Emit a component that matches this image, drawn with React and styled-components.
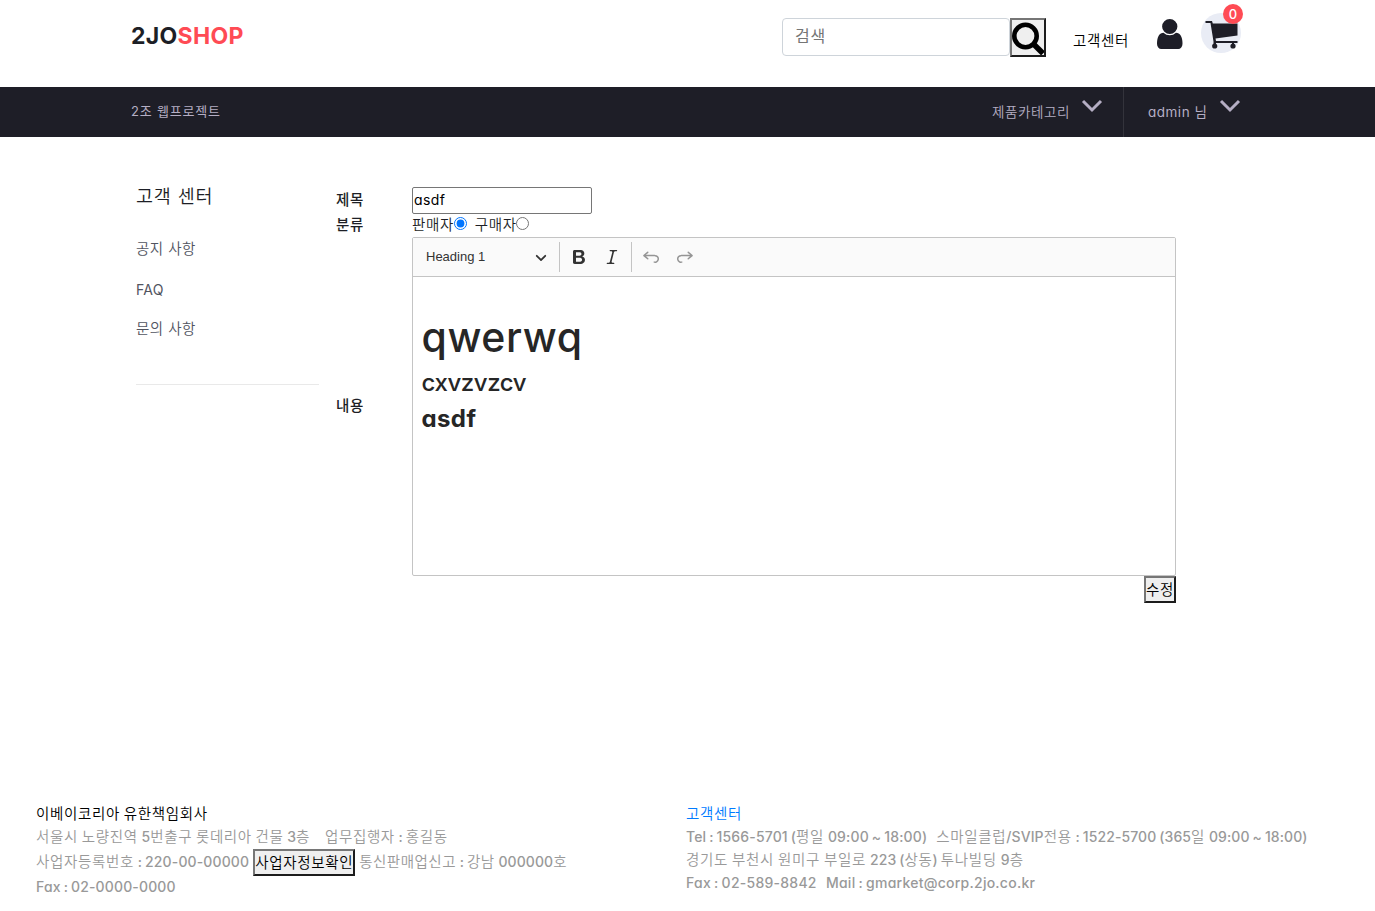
import React from 'react';
import styled, { createGlobalStyle, css } from 'styled-components';

const Global = createGlobalStyle`
  * { box-sizing: border-box; }
  body { margin: 0; background: #fff; font-family: Inter, "Noto Sans CJK KR", sans-serif; font-feature-settings: "cv11"; font-size: 15px; color: #1d1f26; }
`;
const Page = styled.div`width: 100%; height: 911px; overflow: hidden; display: flex; flex-direction: column;`;
const T = styled.span`
  display: block; white-space: pre;
  font-size: ${p => p.$s || 14}px; line-height: ${p => p.$lh || 24}px;
  letter-spacing: ${p => p.$ls || 0}px; font-weight: ${p => p.$w || 400}; color: ${p => p.$c || 'inherit'};
`;
const Header = styled.header`height: 87px; display: flex; align-items: flex-start; padding-left: 131px;`;
const Logo = styled.div`
  width: 651px; padding-top: 19px; font-size: 23px; line-height: 34px; font-weight: 700; letter-spacing: 0.3px;
  span { color: #ff4b54; }
`;
const Search = styled.input`
  width: 228px; height: 38px; margin-top: 18px; padding: 0 12px 2px; border: 1px solid #ced4da; border-radius: 4px;
  font: 16px Inter, "Noto Sans CJK KR", sans-serif; letter-spacing: 0.8px; outline: 0;
  &::placeholder { color: #757575; opacity: 1; }
`;
const outset = css`background: #efefef; border: 2px solid; border-color: #767676 #1c1c1c #1c1c1c #767676; color: #000;`;
const SearchButton = styled.button`${outset} width: 36px; height: 39px; margin-top: 18px; padding: 0; overflow: hidden; svg { display: block; }`;
const HelpLink = styled.a`margin: 29px 0 0 27px; width: 84px;`;
const UserIcon = styled.svg`margin-top: 18.5px; width: 25.5px; height: 30px;`;
const Cart = styled.div`
  position: relative; margin: 13px 0 0 18.5px; width: 40px; height: 40px; border-radius: 50%; background: #e9ecf5;
  svg { display: block; margin: 6px 0 0 4px; }
`;
const Badge = styled.span`
  position: absolute; left: 22px; top: -9px; width: 20px; height: 20px; border-radius: 50%; background: #ff4b54;
  color: #fff; font-size: 13px; line-height: 20px; text-align: center; font-weight: 500;
`;
const Nav = styled.nav`height: 50px; background: #1e1e27; color: #b5aec4; display: flex; padding-left: 131px;`;
const NavTitle = styled.div`width: 861px; padding-top: 12px;`;
const NavItem = styled.div`
  display: flex; align-items: flex-start; width: ${p => p.$width}px; padding-left: ${p => p.$pl || 0}px;
  border-left: ${p => (p.$line ? '1px solid #33333b' : '0')};
  span { padding-top: 13px; width: ${p => p.$label}px; }
  svg { margin-top: 12px; }
`;
const Main = styled.main`display: flex; height: 665px; padding: 50px 0 0 136px;`;
const Side = styled.aside`width: 183px; height: 198px; border-bottom: 1px solid #e9e9e9; display: flex; flex-direction: column;`;
const SideLink = styled.a`margin-top: ${p => p.$mt}px;`;
const Form = styled.form`margin-left: 17px; width: 840px; display: grid; grid-template-columns: 76px 764px; grid-template-rows: 27px 23px 339px 27px; align-items: center;`;
const Label = styled.label`padding-bottom: 2px;`;
const TextInput = styled.input`width: 180px; height: 27px; padding: 0 1px 3px; border: 1px solid #767676; border-radius: 2px; font: 14px Inter, sans-serif; font-feature-settings: "cv11"; letter-spacing: 0.4px; outline: 0;`;
const Radios = styled.div`display: flex; height: 25px; align-items: flex-start;`;
const Radio = styled.input`width: 13px; height: 13px; margin: 4px ${p => p.$mr || 0}px 0 -0.3px; accent-color: #0075ff;`;
const Editor = styled.div`height: 339px; border: 1px solid #c4c4c4; border-radius: 2px; color: #262626;`;
const Toolbar = styled.div`height: 39px; background: #fafafa; border-bottom: 1px solid #c4c4c4; display: flex; align-items: center; padding-left: 13px; color: #333;`;
const Heading = styled.div`width: 133px; display: flex; align-items: center; font: 13px "Liberation Sans", Arial, sans-serif; span { width: 109px; padding-bottom: 1px; } svg { margin-bottom: 1px; }`;
const Divider = styled.i`width: 1px; height: 30px; background: #c4c4c4; margin-right: ${p => p.$mr}px;`;
const Tool = styled.svg`width: 20px; height: 20px; fill: #333; margin-right: ${p => p.$mr || 0}px; opacity: ${p => (p.$off ? 0.5 : 1)}; transform: ${p => (p.$flip ? 'scaleX(-1)' : 'none')};`;
const Content = styled.div`padding: 36px 8.5px;`;
const Submit = styled.button`${outset} grid-column: 2; justify-self: end; width: 32px; height: 27px; padding: 0 0 3px; font-family: inherit;`;
const Footer = styled.footer`display: flex; padding-left: 36px; color: #999; word-spacing: -0.9px;`;
const Col = styled.div`width: ${p => p.$width}px; height: 108px;`;
const Line = styled.div`display: flex; align-items: center; height: ${p => p.$h}px;`;
const InfoButton = styled.button`${outset} width: 102px; height: 27px; padding: 0 0 3px; margin: 1px 4px 0; font-family: inherit;`;

const Chevron = () => (
  <svg width="22" height="14" viewBox="0 0 22 14"><path d="M2 2l9 9 9-9" fill="none" stroke="#b5aec4" strokeWidth="3" /></svg>
);
const Undo = 'm5.042 9.367 2.189 1.837a.75.75 0 0 1-.965 1.149l-3.788-3.18a.747.747 0 0 1-.21-.284.75.75 0 0 1 .17-.945L6.23 4.762a.75.75 0 1 1 .964 1.15L4.863 7.866h8.917A.75.75 0 0 1 14 7.9a4 4 0 1 1-1.477 7.718l.344-1.489a2.5 2.5 0 1 0 1.094-4.73l.008-.032H5.042z';
const Ko = p => <T $s={14.5} $ls={0.65} $w={350} {...p} />;
const En = p => <T $s={14} $ls={0.1} $w={500} {...p} />;

export default function App() {
  return (
    <Page>
      <Global />
      <Header>
        <Logo>2JO<span>SHOP</span></Logo>
        <Search placeholder="검색" />
        <SearchButton type="button">
          <svg width="32" height="35" viewBox="0 0 32 35"><circle cx="13.500" cy="16" r="11.200" fill="none" stroke="#000" strokeWidth="4.600" /><path d="M21.500 24l9.500 9.500" stroke="#000" strokeWidth="5.500" /></svg>
        </SearchButton>
        <HelpLink><Ko $c="#000">고객센터</Ko></HelpLink>
        <UserIcon viewBox="0 -1408 1280 1536" preserveAspectRatio="none"><path transform="scale(1,-1)" fill="#1e1e27" d="M1280 137q0 -109 -62.500 -187t-150.500 -78h-854q-88 0 -150.500 78t-62.500 187q0 85 8.500 160.500t31.500 152t58.500 131t94 89t134.500 34.500q131 -128 313 -128t313 128q76 0 134.500 -34.500t94 -89t58.500 -131t31.500 -152t8.500 -160.500zM1024 1024q0 -159 -112.500 -271.500t-271.500 -112.500t-271.500 112.500t-112.500 271.500t112.500 271.500t271.500 112.500t271.500 -112.500t112.500 -271.500z" /></UserIcon>
        <Cart>
          <svg width="34" height="31" viewBox="0 0 34 31" fill="#1e1e27"><path d="M.5 2H7l.8 2.500H32.500v12L10.500 19.500l.5 2.500H32.500v2H29v3h-2v-3H11v3H8.500v-4.500L5.500 4h-5z" /><circle cx="9.700" cy="27" r="2.600" /><circle cx="28" cy="27" r="2.600" /></svg>
          <Badge>0</Badge>
        </Cart>
      </Header>
      <Nav>
        <NavTitle><T $s={13} $ls={0.8}>2조 웹프로젝트</T></NavTitle>
        <NavItem $width={131} $label={89}><T $s={13.500} $ls={0.6} $w={350}>제품카테고리</T><Chevron /></NavItem>
        <NavItem $width={150} $line $pl={24} $label={71}><T $s={13.500} $ls={0.5}>admin 님</T><Chevron /></NavItem>
      </Nav>
      <Main>
        <Side>
          <T $s={18.500} $ls={0.8} $w={350} $lh={19}>고객 센터</T>
          <SideLink $mt={31}><Ko $ls={0.5} $c="#51545f">공지 사항</Ko></SideLink>
          <SideLink $mt={17}><T $ls={0.3} $c="#51545f">FAQ</T></SideLink>
          <SideLink $mt={15}><Ko $ls={0.5} $c="#51545f">문의 사항</Ko></SideLink>
        </Side>
        <Form>
          <Label><Ko $w={500}>제목</Ko></Label><TextInput defaultValue="asdf" />
          <Label><Ko $w={500}>분류</Ko></Label>
          <Radios><Ko>판매자</Ko><Radio type="radio" name="role" defaultChecked $mr={8} /><Ko>구매자</Ko><Radio type="radio" name="role" /></Radios>
          <Label><Ko $w={500}>내용</Ko></Label>
          <Editor>
            <Toolbar>
              <Heading><span>Heading 1</span><svg width="12" height="12" viewBox="0 0 10 10"><path fill="#333" d="M.941 4.523a.75.75 0 1 1 1.060-1.060l3.006 3.005 3.005-3.005a.75.75 0 1 1 1.060 1.060l-3.549 3.550a.75.75 0 0 1-1.168-.136L.941 4.523z" /></svg></Heading>
              <Divider $mr={9} />
              <Tool viewBox="0 0 20 20" $mr={13}><path d="M10.187 17H5.773c-.637 0-1.092-.138-1.364-.415-.273-.277-.409-.718-.409-1.323V4.738c0-.617.14-1.062.419-1.332.279-.27.73-.406 1.354-.406h4.680c.69 0 1.288.041 1.793.124.506.083.96.242 1.360.478.341.197.644.447.906.75a3.262 3.262 0 0 1 .808 2.162c0 1.401-.722 2.426-2.167 3.075C15.050 10.175 16 11.315 16 13.010a3.756 3.756 0 0 1-2.296 3.504 6.100 6.100 0 0 1-1.517.377c-.571.073-1.238.11-2 .11zm-.217-6.217H7v4.087h3.069c1.977 0 2.965-.69 2.965-2.072 0-.707-.256-1.220-.768-1.537-.512-.319-1.277-.478-2.296-.478zM7 5.130v3.619h2.606c.729 0 1.292-.067 1.690-.2a1.600 1.600 0 0 0 .91-.765c.165-.267.247-.566.247-.897 0-.707-.26-1.176-.778-1.409-.519-.232-1.310-.348-2.375-.348H7z" /></Tool>
              <Tool viewBox="0 0 20 20" $mr={9}><path d="m9.586 14.633.021.004c-.036.335.095.655.393.962.082.083.173.15.274.201h1.474a.6.6 0 1 1 0 1.200H5.304a.6.6 0 0 1 0-1.200h1.150c.474-.07.809-.182 1.005-.334.157-.122.291-.32.404-.597l2.416-9.550a1.053 1.053 0 0 0-.281-.823 1.120 1.120 0 0 0-.442-.296H8.150a.6.6 0 0 1 0-1.200h6.443a.6.6 0 1 1 0 1.200h-1.195c-.376.056-.65.155-.823.296-.215.175-.423.439-.623.79l-2.366 9.347z" /></Tool>
              <Divider $mr={9} />
              <Tool viewBox="0 0 20 20" $off $mr={14}><path d={Undo} /></Tool>
              <Tool viewBox="0 0 20 20" $off $flip><path d={Undo} /></Tool>
            </Toolbar>
            <Content>
              <T $s={41} $ls={0.6} $lh={49} $w={450}>qwerwq</T>
              <T $s={24} $ls={-0.4} $lh={42} $w={500}>cxvzvzcv</T>
              <T $s={24} $ls={0.4} $lh={30} $w={700}>asdf</T>
            </Content>
          </Editor>
          <Submit type="button"><Ko>수정</Ko></Submit>
        </Form>
      </Main>
      <Footer>
        <Col $width={650}>
          <Line $h={23}><Ko $c="#000">이베이코리아 유한책임회사</Ko></Line>
          <Line $h={23}><Ko>서울시 노량진역 </Ko><En>5</En><Ko $ls={0.6}>번출구 롯데리아 건물 </Ko><En>3</En><Ko $ls={0.6}>층    업무집행자 </Ko><En>: </En><Ko>홍길동</Ko></Line>
          <Line $h={27}><Ko>사업자등록번호 </Ko><En $ls={0.13}>: 220-00-00000</En><InfoButton type="button"><Ko>사업자정보확인</Ko></InfoButton><Ko $ls={0.5}>통신판매업신고 </Ko><En>: </En><Ko $ls={0.5}>강남 </Ko><En>000000</En><Ko>호</Ko></Line>
          <Line $h={23}><En $ls={0.15}>Fax : 02-0000-0000</En></Line>
        </Col>
        <Col $width={680}>
          <Line $h={23}><Ko $c="#007bff">고객센터</Ko></Line>
          <Line $h={23}><En $ls={0.15}>Tel : 1566-5701 (</En><Ko>평일 </Ko><En $ls={0.15}>09:00 ~ 18:00)   </En><Ko>스마일클럽</Ko><En>/SVIP</En><Ko>전용 </Ko><En>: 1522-5700 (365</En><Ko>일 </Ko><En>09:00 ~ 18:00)</En></Line>
          <Line $h={23}><Ko $ls={0.7}>경기도 부천시 원미구 부일로 </Ko><En>223 (</En><Ko>상동</Ko><En>) </En><Ko $ls={0.7}>투나빌딩 </Ko><En>9</En><Ko>층</Ko></Line>
          <Line $h={23}><En $ls={0.25}>Fax : 02-589-8842   Mail : gmarket@corp.2jo.co.kr</En></Line>
        </Col>
      </Footer>
    </Page>
  );
}
